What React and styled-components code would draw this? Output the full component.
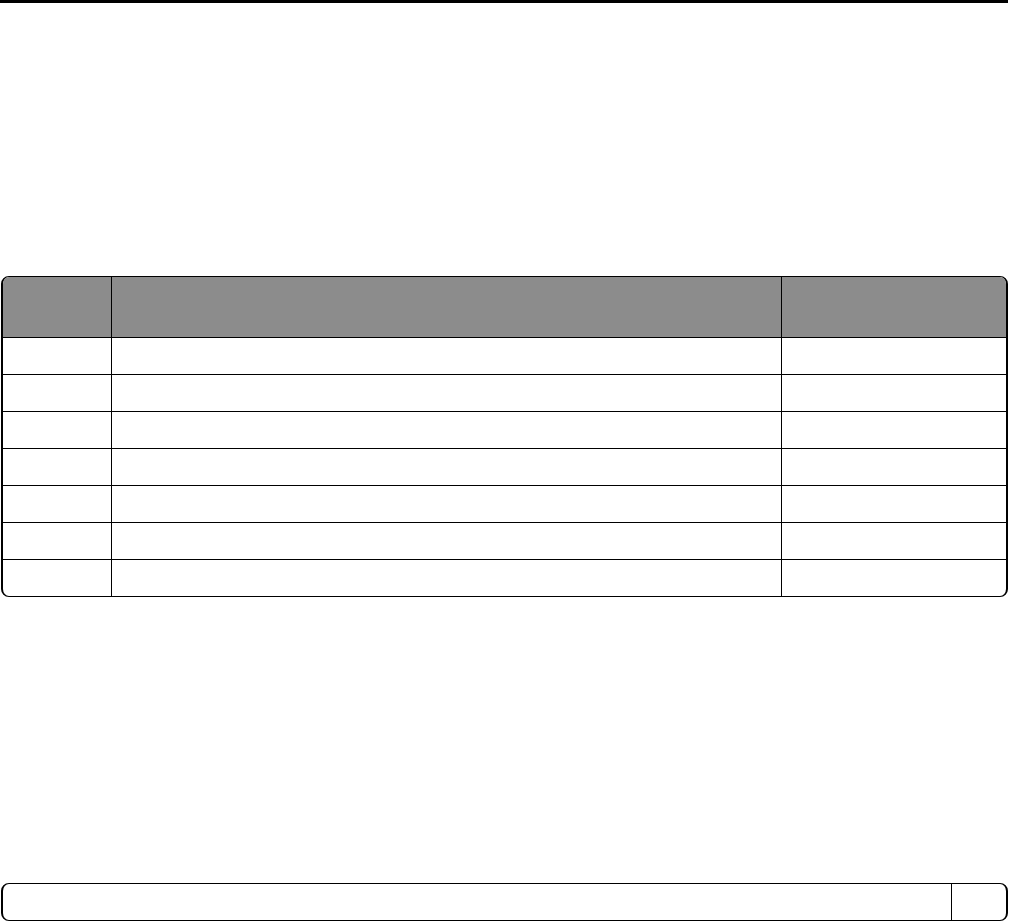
import React from "react";
import styled, { createGlobalStyle } from "styled-components";

const rows = [1, 2, 3, 4, 5, 6, 7];

const App = () => {
	return (
		<>
			<GlobalStyle />
			<StyledPage>
				<StyledRule />
				<StyledTable>
					<StyledHeadRow>
						<StyledCell $w="109px" />
						<StyledCell $w="670px" />
						<StyledCell $last />
					</StyledHeadRow>
					{rows.map((r, i) => (
						<StyledRow key={r} $last={i === rows.length - 1}>
							<StyledCell $w="109px" />
							<StyledCell $w="670px" />
							<StyledCell $last />
						</StyledRow>
					))}
				</StyledTable>
				<StyledFooterBox>
					<StyledFooterMain />
					<StyledFooterPage />
				</StyledFooterBox>
			</StyledPage>
		</>
	);
};

const GlobalStyle = createGlobalStyle`
	html, body {
		margin: 0;
		padding: 0;
		background: #fff;
		font-family: "Liberation Sans", Arial, sans-serif;
	}
	* {
		box-sizing: border-box;
	}
`;

const StyledPage = styled.div`
	width: 1010px;
	height: 923px;
	display: flex;
	flex-direction: column;
`;

const StyledRule = styled.div`
	width: 1008px;
	height: 3px;
	background: #000;
`;

const StyledTable = styled.div`
	margin: 273px 0 0 1px;
	width: 1007px;
	border: 1px solid #000;
	border-left-width: 2px;
	border-right-width: 2px;
	border-radius: 8px;
	overflow: hidden;
	display: flex;
	flex-direction: column;
`;

const StyledHeadRow = styled.div`
	display: flex;
	height: 61px;
	background: #8c8c8c;
	border-bottom: 1px solid #000;
`;

const StyledRow = styled.div`
	display: flex;
	height: ${({ $last }) => ($last ? "36px" : "37px")};
	border-bottom: ${({ $last }) => ($last ? "none" : "1px solid #000")};
`;

const StyledCell = styled.div`
	flex: ${({ $last }) => ($last ? "1 1 auto" : "0 0 auto")};
	width: ${({ $w }) => $w || "auto"};
	border-right: ${({ $last }) => ($last ? "none" : "1px solid #000")};
`;

const StyledFooterBox = styled.div`
	margin: 286px 0 0 1px;
	width: 1007px;
	height: 38px;
	border: 1px solid #000;
	border-left-width: 2px;
	border-right-width: 2px;
	border-radius: 8px;
	display: flex;
`;

const StyledFooterMain = styled.div`
	width: 949px;
	border-right: 1px solid #000;
`;

const StyledFooterPage = styled.div`
	flex: 1;
`;

export default App;
